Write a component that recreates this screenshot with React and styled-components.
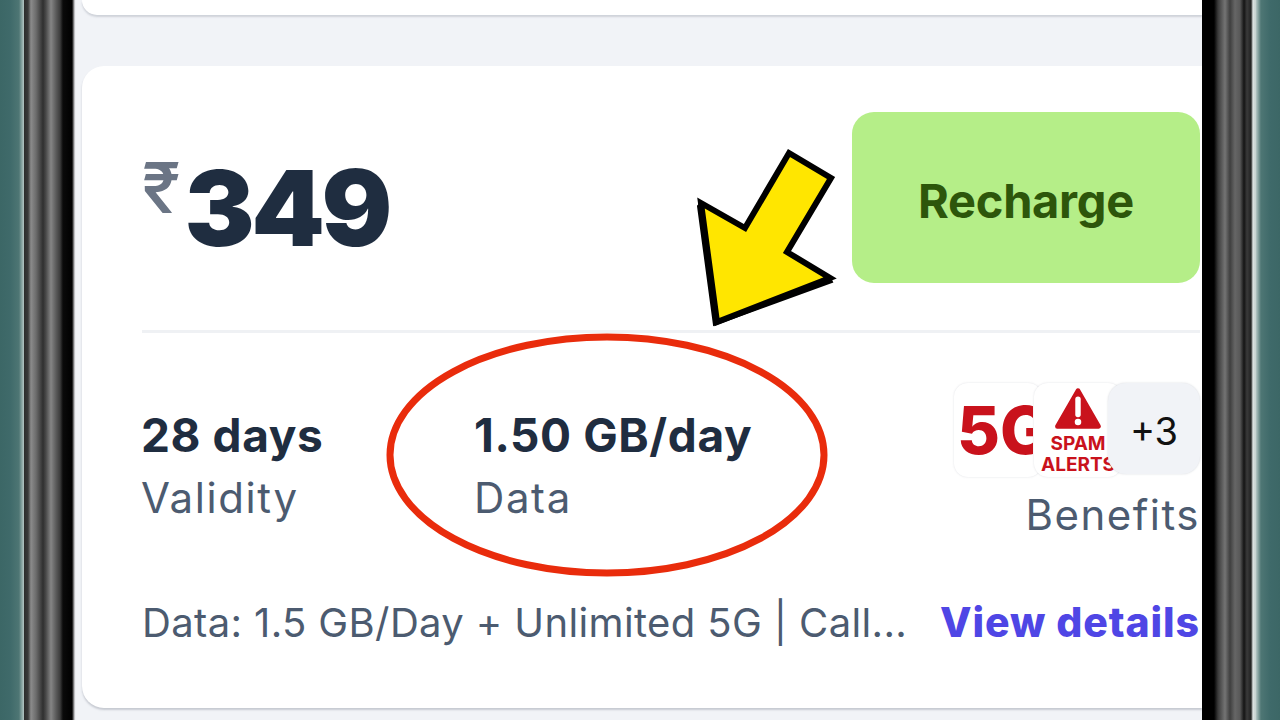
import React from "react";
import styled, { createGlobalStyle } from "styled-components";

const Global = createGlobalStyle`
  html, body { margin: 0; padding: 0; width: 1280px; height: 720px; overflow: hidden; background: #3f6a6a; }
  * { box-sizing: border-box; }
`;

const Stage = styled.div`
  position: relative;
  display: flex;
  width: 1280px;
  height: 720px;
  overflow: hidden;
  font-family: Inter, "Noto Sans", "Liberation Sans", sans-serif;
`;

const Wall = styled.div`
  flex: 1 1 0;
  background: linear-gradient(${(p) => (p.$right ? "90deg" : "270deg")}, #b5c6c4 0, #4e7674 5px, #3f6a6a 14px, #3c6766 100%);
`;

const BezelLeft = styled.div`
  width: 52px;
  flex: none;
  background: linear-gradient(90deg,
    #2c2c2c 0, #3a3a3a 4px, #8b8b8b 7px, #6c6c6c 12px, #2f2f2f 19px, #4a4a4a 22px,
    #858585 27px, #5b5b5b 32px, #3d3d3d 36px, #0a0a0a 39px, #000 48px, #e8e8ec 51px, #f1f3f7 52px);
`;

const BezelRight = styled.div`
  width: 54px;
  flex: none;
  background: linear-gradient(90deg,
    #000 0, #000 12px, #3b3b3b 16px, #747474 23px, #3f3f3f 28px, #666 33px, #585858 38px,
    #141414 42px, #3a3a3a 45px, #222 49px, #dfe5e4 51px, #c9d4d2 53px);
`;

const Screen = styled.div`
  width: 1126px;
  flex: none;
  height: 720px;
  background: #f1f3f7;
  overflow: hidden;
  padding-left: 6px;
`;

const TopCard = styled.div`
  height: 15px;
  background: #fff;
  border-radius: 0 0 0 22px;
  box-shadow: 0 2px 2px rgba(120, 125, 140, 0.28);
`;

const Card = styled.div`
  margin-top: 51px;
  height: 642px;
  background: #fff;
  border-radius: 22px 0 0 22px;
  box-shadow: 0 2px 2px rgba(120, 125, 140, 0.35);
  padding: 46px 2px 0 60px;
`;

const PriceRow = styled.div`
  display: flex;
  justify-content: space-between;
  height: 171px;
`;

const Price = styled.div`
  display: flex;
  align-items: flex-start;
  padding-top: 37px;
  color: #1f2d40;
`;

const Rupee = styled.span`
  font-size: 70px;
  line-height: 78px;
  font-weight: 500;
  color: #6b7585;
  margin-right: 4px;
`;

const Amount = styled.span`
  font-size: 105px;
  line-height: 118px;
  font-weight: 900;
  letter-spacing: -3.5px;
`;

const RechargeButton = styled.button`
  width: 348px;
  height: 171px;
  border: 0;
  border-radius: 22px;
  background: #b5ee88;
  color: #2d560b;
  font-family: inherit;
  font-size: 47px;
  font-weight: 700;
  letter-spacing: -0.3px;
  padding: 6px 0 0;
`;

const Divider = styled.div`
  height: 3px;
  background: #eff1f4;
  margin-top: 47px;
`;

const StatsRow = styled.div`
  display: flex;
  height: 264px;
  padding-top: 50px;
  align-items: flex-start;
`;

const Stat = styled.div`
  width: ${(p) => p.$w}px;
  flex: none;
  padding-top: 24px;
`;

const StatValue = styled.div`
  font-size: 46px;
  line-height: 56px;
  font-weight: 700;
  color: #1f2d40;
  letter-spacing: 0.6px;
  margin-left: -1px;
`;

const StatLabel = styled.div`
  font-size: 42px;
  line-height: 50px;
  margin-top: 10px;
  margin-left: -1px;
  color: #4c5b70;
  letter-spacing: 1.6px;
`;

const Benefits = styled.div`
  margin-left: auto;
  width: 246px;
  display: flex;
  flex-direction: column;
  align-items: flex-end;
`;

const BadgeRow = styled.div`
  display: flex;
  width: 246px;
  height: 96px;
`;

const Badge = styled.div`
  width: 88px;
  height: 94px;
  flex: none;
  margin-right: ${(p) => p.$mr || 0}px;
  padding-top: ${(p) => p.$pt || 0}px;
  background: #fff;
  border-radius: 14px;
  box-shadow: 0 0 2px rgba(120, 125, 140, 0.25);
  overflow: hidden;
  color: #c9121c;
  display: flex;
  flex-direction: column;
  align-items: center;
`;

const FiveG = styled.div`
  width: 79px;
  padding: 0 0 0 3px;
  align-self: flex-start;
  font-size: 66px;
  line-height: 94px;
  font-weight: 800;
  white-space: nowrap;
  overflow: hidden;
`;

const SpamText = styled.div`
  font-size: 19px;
  line-height: 21px;
  font-weight: 700;
  text-align: center;
  white-space: nowrap;
`;

const AlertIcon = styled.svg`
  width: 48px;
  height: 44px;
  flex: none;
  margin-bottom: 2px;
`;

const More = styled.div`
  position: relative;
  width: 92px;
  height: 91px;
  flex: none;
  border-radius: 18px;
  background: #f1f3f7;
  box-shadow: 0 0 2px rgba(120, 125, 140, 0.3);
  display: flex;
  align-items: center;
  justify-content: center;
  padding-top: 5px;
  color: #111;
  font-size: 38px;
`;

const BenefitLabel = styled.div`
  font-size: 42px;
  line-height: 50px;
  margin-top: 11px;
  color: #4c5b70;
  letter-spacing: 1.5px;
`;

const FootRow = styled.div`
  display: flex;
  justify-content: space-between;
  align-items: center;
  height: 50px;
  font-size: 40px;
  color: #4c5b70;
  letter-spacing: 0.37px;
  white-space: nowrap;
`;

const ViewDetails = styled.a`
  font-size: 41px;
  font-weight: 800;
  color: #4f46e5;
  letter-spacing: 0.9px;
`;

const Overlay = styled.svg`
  position: absolute;
  left: 0;
  top: 0;
  width: 1280px;
  height: 720px;
  pointer-events: none;
`;

export default function App() {
  return (
    <Stage>
      <Global />
      <Wall />
      <BezelLeft />
      <Screen>
        <TopCard />
        <Card>
          <PriceRow>
            <Price>
              <Rupee>₹</Rupee>
              <Amount>349</Amount>
            </Price>
            <RechargeButton>Recharge</RechargeButton>
          </PriceRow>
          <Divider />
          <StatsRow>
            <Stat $w={333}>
              <StatValue>28 days</StatValue>
              <StatLabel>Validity</StatLabel>
            </Stat>
            <Stat $w={400}>
              <StatValue>1.50 GB/day</StatValue>
              <StatLabel>Data</StatLabel>
            </Stat>
            <Benefits>
              <BadgeRow>
                <Badge $mr={-8}>
                  <FiveG>5G</FiveG>
                </Badge>
                <Badge $mr={-14} $pt={4}>
                  <AlertIcon viewBox="0 0 44 40">
                    <path d="M22 3 L41 36 L3 36 Z" fill="#c9121c" stroke="#c9121c" strokeWidth="4" strokeLinejoin="round" />
                    <path d="M22 11 V25" stroke="#fff" strokeWidth="5" strokeLinecap="round" />
                    <circle cx="22" cy="32" r="3" fill="#fff" />
                  </AlertIcon>
                  <SpamText>SPAM</SpamText>
                  <SpamText>ALERTS</SpamText>
                </Badge>
                <More>+3</More>
              </BadgeRow>
              <BenefitLabel>Benefits</BenefitLabel>
            </Benefits>
          </StatsRow>
          <FootRow>
            <span>Data: 1.5 GB/Day + Unlimited 5G | Call...</span>
            <ViewDetails>View details</ViewDetails>
          </FootRow>
        </Card>
      </Screen>
      <BezelRight />
      <Wall $right />
      <Overlay viewBox="0 0 1280 720">
        <ellipse cx="607" cy="455" rx="217" ry="118" fill="none" stroke="#e92c0c" strokeWidth="7" />
        <path
          d="M789 153 L831 178 L787 252 L830 278 L717 322 L701 203 L745 228 Z"
          fill="#ffe600"
          stroke="#000"
          strokeWidth="6"
          strokeLinejoin="miter"
        />
        <path d="M701 203 L698 206 L714 325 L832 282 L830 278 L717 322 Z" fill="#000" stroke="#000" strokeWidth="2" />
      </Overlay>
    </Stage>
  );
}
